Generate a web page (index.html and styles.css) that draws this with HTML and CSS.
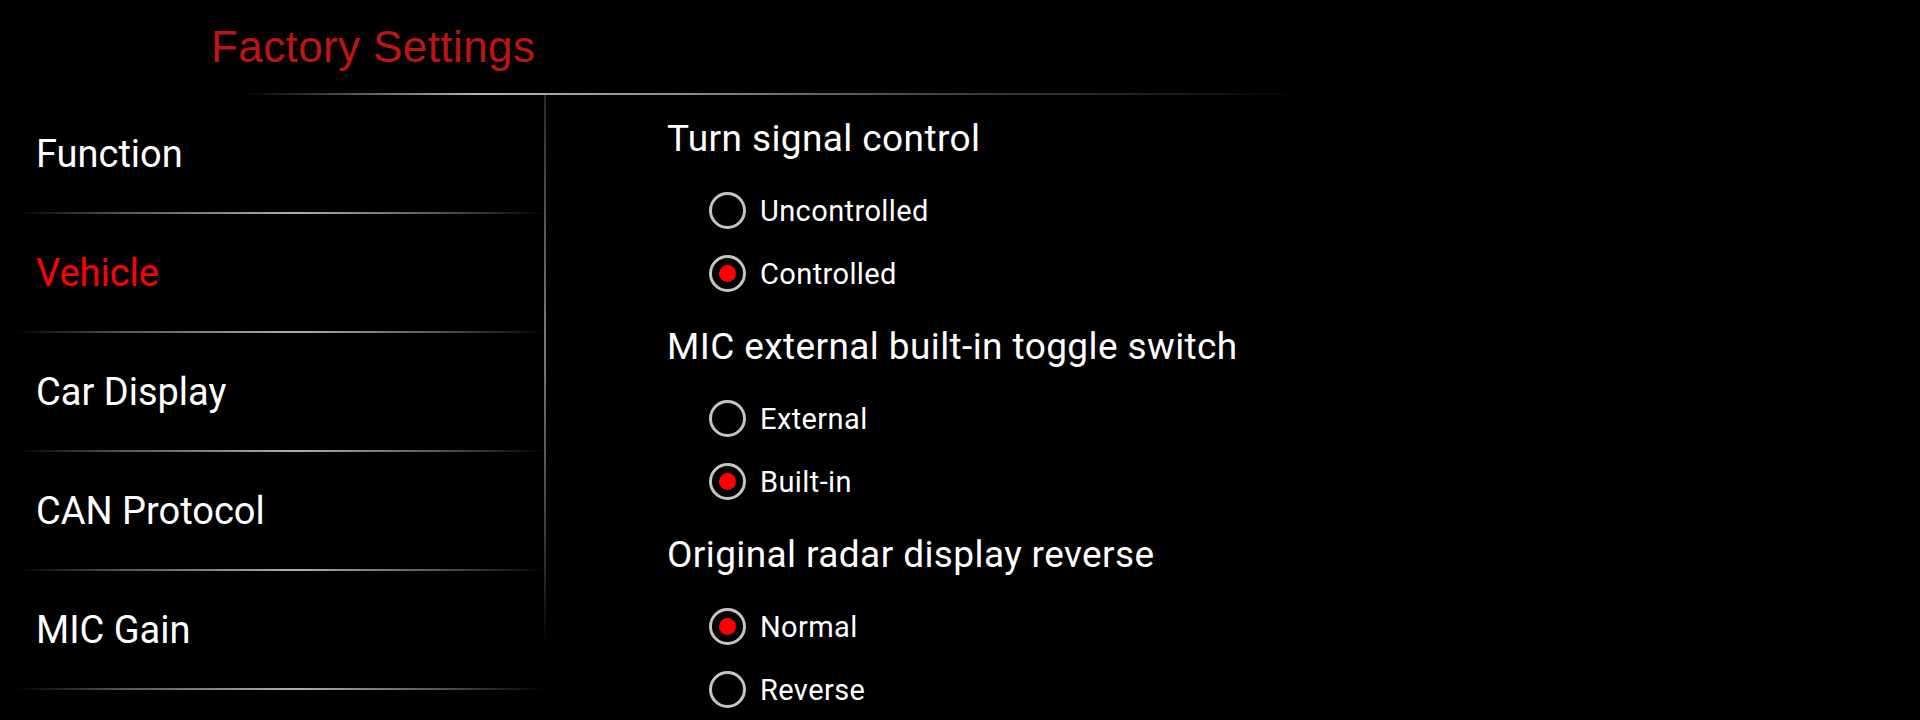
FILE: index.html
```html
<!DOCTYPE html>
<html>
<head>
<meta charset="utf-8">
<title>Factory Settings</title>
<link rel="stylesheet" href="styles.css">
</head>
<body>
<div class="screen">
  <header class="header">
    <h1 class="title">Factory Settings</h1>
  </header>
  <div class="header-line"></div>
  <div class="main">
    <nav class="menu">
      <div class="menu-item">Function</div>
      <div class="menu-item active">Vehicle</div>
      <div class="menu-item">Car Display</div>
      <div class="menu-item">CAN Protocol</div>
      <div class="menu-item">MIC Gain</div>
    </nav>
    <section class="content">
      <div class="group">
        <div class="group-title">Turn signal control</div>
        <div class="option"><span class="radio"></span><span class="label">Uncontrolled</span></div>
        <div class="option"><span class="radio checked"></span><span class="label">Controlled</span></div>
      </div>
      <div class="group">
        <div class="group-title">MIC external built-in toggle switch</div>
        <div class="option"><span class="radio"></span><span class="label">External</span></div>
        <div class="option"><span class="radio checked"></span><span class="label">Built-in</span></div>
      </div>
      <div class="group">
        <div class="group-title">Original radar display reverse</div>
        <div class="option"><span class="radio checked"></span><span class="label">Normal</span></div>
        <div class="option"><span class="radio"></span><span class="label">Reverse</span></div>
      </div>
    </section>
  </div>
</div>
</body>
</html>
```
FILE: styles.css
```css
html, body {
  margin: 0;
  padding: 0;
  background: #000;
  overflow: hidden;
}
.screen {
  width: 1920px;
  height: 720px;
  background: #000;
  font-family: Roboto, "Noto Sans", sans-serif;
  color: #fff;
}
.header {
  height: 93px;
  box-sizing: border-box;
  padding: 22px 0 0 211px;
}
.title {
  margin: 0;
  font-family: "Liberation Sans", Arial, sans-serif;
  font-weight: normal;
  font-size: 44px;
  letter-spacing: 0.4px;
  line-height: 50px;
  color: #bd1414;
}
.header-line {
  height: 2px;
  margin-left: 245px;
  width: 1060px;
  background: linear-gradient(to right, rgba(255,255,255,0) 0%, #b5b5b5 22%, #8a8a8a 42%, #444 65%, #1a1a1a 88%, rgba(255,255,255,0) 100%);
}
.main {
  display: flex;
  height: 625px;
}
.menu {
  width: 546px;
  box-sizing: border-box;
  padding-left: 17px;
  border-right: 2px solid #555;
  border-image: linear-gradient(to bottom, #2a2a2a 0%, #5e5e5e 25%, #7a7a7a 40%, #4a4a4a 65%, #1e1e1e 80%, rgba(0,0,0,0) 88%) 1;
  display: flex;
  flex-direction: column;
}
.menu-item {
  height: 119px;
  box-sizing: border-box;
  padding: 1px 0 0 19px;
  display: flex;
  align-items: center;
  font-size: 38px;
  color: #fff;
  border-bottom: 2px solid #888;
  border-image: linear-gradient(to right, rgba(255,255,255,0) 0%, #555 20%, #b0b0b0 53%, #555 80%, rgba(255,255,255,0) 100%) 1;
}
.menu-item.active {
  color: #ff0000;
}
.content {
  flex: 1;
  box-sizing: border-box;
  padding: 20px 0 0 121px;
  display: flex;
  flex-direction: column;
}
.group {
  display: flex;
  flex-direction: column;
  padding-bottom: 18px;
}
.group-title {
  height: 48px;
  line-height: 48px;
  font-size: 37px;
  letter-spacing: 0.4px;
  margin-bottom: 16px;
  white-space: nowrap;
}
.option {
  height: 63px;
  display: flex;
  align-items: center;
  padding-left: 42px;
  gap: 14px;
}
.radio {
  width: 37px;
  height: 37px;
  box-sizing: border-box;
  border: 3px solid #c4c4c4;
  border-radius: 50%;
  display: flex;
  align-items: center;
  justify-content: center;
  flex: none;
}
.radio.checked::after {
  content: "";
  width: 17px;
  height: 17px;
  border-radius: 50%;
  background: #ff0000;
}
.label {
  font-size: 29px;
  letter-spacing: 0.4px;
  line-height: 34px;
  color: #fff;
}
```
